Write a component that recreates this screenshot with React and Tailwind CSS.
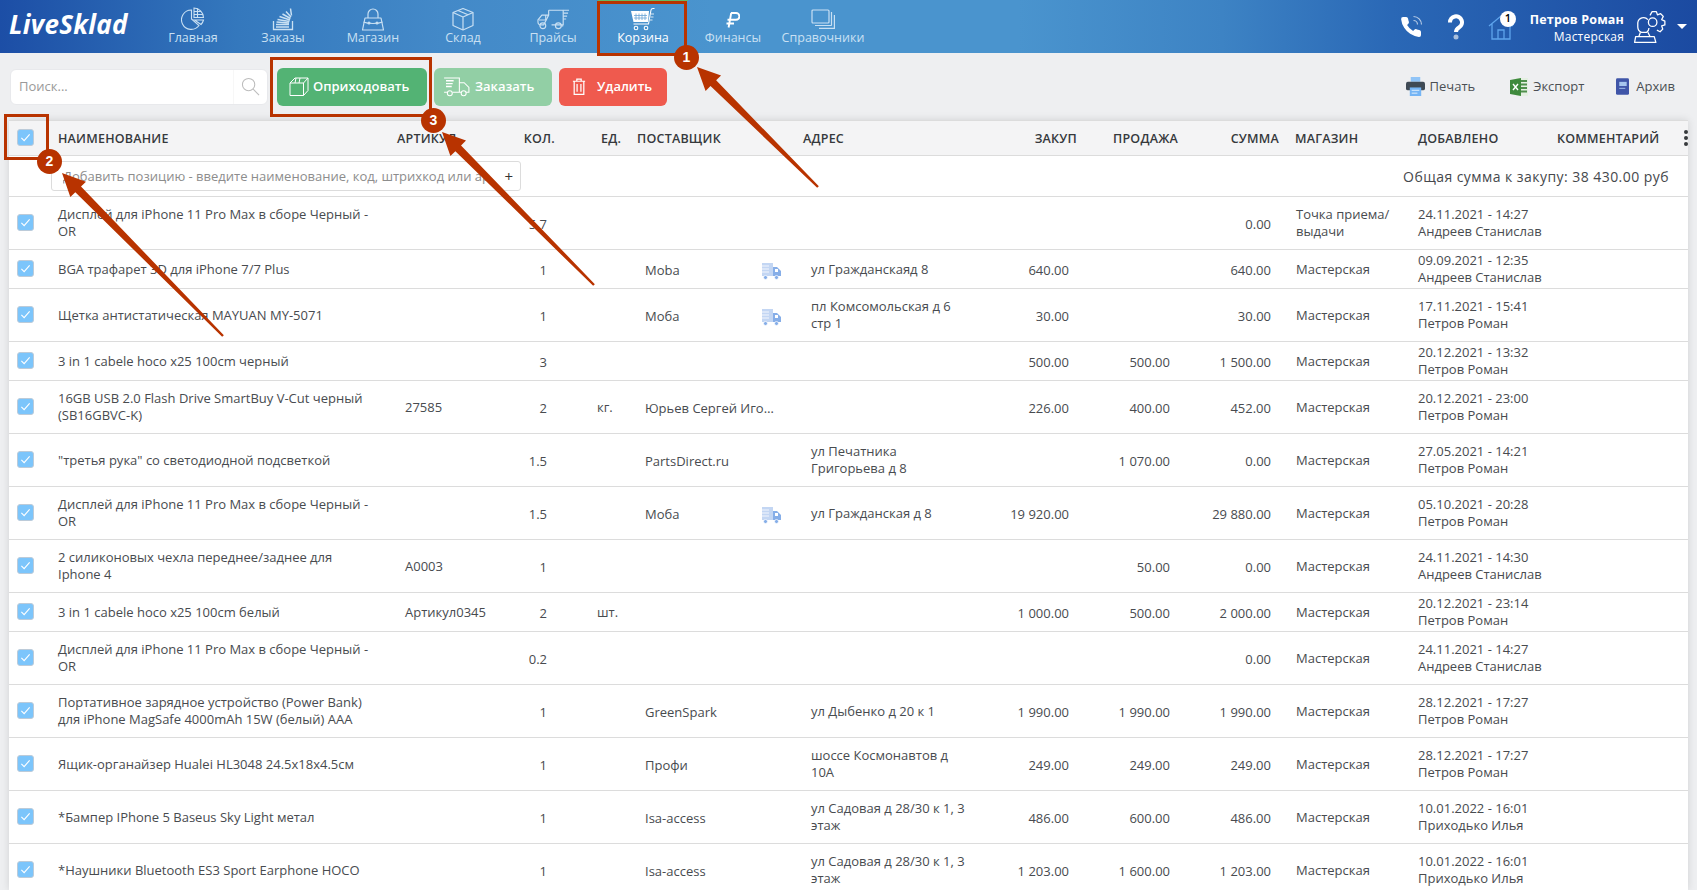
// LiveSklad - страница "Корзина" с аннотациями

const navItems = [
    { label: 'Главная', icon: PieIcon },
    { label: 'Заказы', icon: OrdersIcon },
    { label: 'Магазин', icon: BagIcon },
    { label: 'Склад', icon: BoxIcon },
    { label: 'Прайсы', icon: DeliveryIcon },
    { label: 'Корзина', icon: CartIcon, active: true },
    { label: 'Финансы', icon: RubleIcon },
    { label: 'Справочники', icon: CopyIcon },
];

const dispName = 'Дисплей для iPhone 11 Pro Max в сборе Черный -\nOR';

const rows = [
    { name: dispName, qty: '5.7', sum: '0.00', store: 'Точка приема/\nвыдачи', date: '24.11.2021 - 14:27', user: 'Андреев Станислав' },
    { name: 'BGA трафарет 3D для iPhone 7/7 Plus', qty: '1', supplier: 'Moba', truck: true, addr: 'ул Гражданскаяд 8', buy: '640.00', sum: '640.00', date: '09.09.2021 - 12:35', user: 'Андреев Станислав' },
    { name: 'Щетка антистатическая MAYUAN MY-5071', qty: '1', supplier: 'Моба', truck: true, addr: 'пл Комсомольская д 6\nстр 1', buy: '30.00', sum: '30.00', date: '17.11.2021 - 15:41', user: 'Петров Роман' },
    { name: '3 in 1 cabele hoco x25 100cm черный', qty: '3', buy: '500.00', sell: '500.00', sum: '1 500.00', date: '20.12.2021 - 13:32', user: 'Петров Роман' },
    { name: '16GB USB 2.0 Flash Drive SmartBuy V-Cut черный\n(SB16GBVC-K)', art: '27585', qty: '2', unit: 'кг.', supplier: 'Юрьев Сергей Игоревич', buy: '226.00', sell: '400.00', sum: '452.00', date: '20.12.2021 - 23:00', user: 'Петров Роман' },
    { name: '"третья рука" со светодиодной подсветкой', qty: '1.5', supplier: 'PartsDirect.ru', addr: 'ул Печатника\nГригорьева д 8', sell: '1 070.00', sum: '0.00', date: '27.05.2021 - 14:21', user: 'Петров Роман' },
    { name: dispName, qty: '1.5', supplier: 'Моба', truck: true, addr: 'ул Гражданская д 8', buy: '19 920.00', sum: '29 880.00', date: '05.10.2021 - 20:28', user: 'Петров Роман' },
    { name: '2 силиконовых чехла переднее/заднее для\nIphone 4', art: 'A0003', qty: '1', sell: '50.00', sum: '0.00', date: '24.11.2021 - 14:30', user: 'Андреев Станислав' },
    { name: '3 in 1 cabele hoco x25 100cm белый', art: 'Артикул0345', qty: '2', unit: 'шт.', buy: '1 000.00', sell: '500.00', sum: '2 000.00', date: '20.12.2021 - 23:14', user: 'Петров Роман' },
    { name: dispName, qty: '0.2', sum: '0.00', date: '24.11.2021 - 14:27', user: 'Андреев Станислав' },
    { name: 'Портативное зарядное устройство (Power Bank)\nдля iPhone MagSafe 4000mAh 15W (белый) AAA', qty: '1', supplier: 'GreenSpark', addr: 'ул Дыбенко д 20 к 1', buy: '1 990.00', sell: '1 990.00', sum: '1 990.00', date: '28.12.2021 - 17:27', user: 'Петров Роман' },
    { name: 'Ящик-органайзер Hualei HL3048 24.5x18x4.5см', qty: '1', supplier: 'Профи', addr: 'шоссе Космонавтов д\n10А', buy: '249.00', sell: '249.00', sum: '249.00', date: '28.12.2021 - 17:27', user: 'Петров Роман' },
    { name: '*Бампер IPhone 5 Baseus Sky Light метал', qty: '1', supplier: 'Isa-access', addr: 'ул Садовая д 28/30 к 1, 3\nэтаж', buy: '486.00', sell: '600.00', sum: '486.00', date: '10.01.2022 - 16:01', user: 'Приходько Илья' },
    { name: '*Наушники Bluetooth ES3 Sport Earphone HOCO', qty: '1', supplier: 'Isa-access', addr: 'ул Садовая д 28/30 к 1, 3\nэтаж', buy: '1 203.00', sell: '1 600.00', sum: '1 203.00', date: '10.01.2022 - 16:01', user: 'Приходько Илья' },
];

/* nav icons */
function PieIcon() {
    return (
        <svg viewBox="0 0 24 24" className="w-6 h-6" fill="none" stroke="currentColor" strokeWidth="1.1">
            <path d="M10.5 3 A9.7 9.7 0 1 0 18 18.5 L10.5 12 Z" />
            <path d="M13 1 A10 10 0 0 1 22.5 10.5 H13 Z" />
            <path d="M13 4.5 H20 M13 7.5 H22 M16.5 1.5 V10.5" />
            <path d="M13.5 13 H22.5 A10 10 0 0 1 20 17.5 Z" />
        </svg>
    );
}

function OrdersIcon() {
    return (
        <svg viewBox="0 0 24 24" className="w-6 h-6" fill="none" stroke="currentColor">
            <path d="M2.5 14 V22.5 H21.5 V14" strokeWidth="1.3" />
            <path d="M5 20 H18 M5 17.5 H18 M5.5 15 L18 16 M6.5 12.5 L18.5 14.5 M8.5 9.5 L19 13 M11.5 7 L19.5 11.5 M15 4.5 L20 10 M19.5 1.5 L20.5 8.5" strokeWidth="1.5" />
        </svg>
    );
}

function BagIcon() {
    return (
        <svg viewBox="0 0 24 24" className="w-6 h-6" fill="none" stroke="currentColor" strokeWidth="1.2">
            <path d="M4 11 H20 L22.5 23 H1.5 Z" strokeLinejoin="round" />
            <path d="M7 11 V7 A5 5 0 0 1 17 7 V11" />
            <path d="M2.5 15 C7 17 17 17 21.5 15" />
            <circle cx="8" cy="16" r="0.9" fill="currentColor" />
            <circle cx="16" cy="16" r="0.9" fill="currentColor" />
        </svg>
    );
}

function BoxIcon() {
    return (
        <svg viewBox="0 0 24 24" className="w-6 h-6" fill="none" stroke="currentColor" strokeWidth="1.2" strokeLinejoin="round">
            <path d="M12 1.5 L22 5.5 V18.5 L12 23 L2 18.5 V5.5 Z" />
            <path d="M2 5.5 L12 10 L22 5.5 M12 10 V23 M7 3.5 L17 7.8" />
        </svg>
    );
}

function DeliveryIcon() {
    return (
        <svg viewBox="0 0 34 24" className="w-[33px] h-6" fill="none" stroke="currentColor" strokeWidth="1.2" strokeLinejoin="round">
            <path d="M12 3 H27 V18 H15 M7 18 H4 Q1 18 1 15 V13 L5 8 H12 Z" />
            <path d="M12 3 V8 M9 8 V13 H2" />
            <circle cx="6" cy="19" r="3" />
            <circle cx="22" cy="19" r="3" />
            <path d="M25 19 H27 M27 3 H33 M27 6 H32 M27 9 H31 M27 12 H30" />
        </svg>
    );
}

function CartIcon() {
    return (
        <svg viewBox="0 0 26 24" className="w-[26px] h-6">
            <path d="M1 4 H19 L18 15 H3.5 Z" fill="#ffffff" />
            <path d="M6 6.5 V13 M9 6.5 V13 M12 6.5 V13 M15 6.5 V13 M4 8.5 H17 M4 11 H17" stroke="#6aa5d6" strokeWidth="0.8" />
            <path d="M3.5 17 H18.5 L21 3 Q21.3 1.5 23 1.5 H24.5" stroke="#ffffff" strokeWidth="1.1" fill="none" />
            <circle cx="6" cy="21" r="1.8" fill="none" stroke="#ffffff" strokeWidth="1.1" />
            <circle cx="16" cy="21" r="1.8" fill="none" stroke="#ffffff" strokeWidth="1.1" />
            <path d="M21 7 H24 M20.5 10 H23.5 M20 13 H22.5" stroke="#ffffff" strokeWidth="0.8" />
        </svg>
    );
}

function RubleIcon() {
    return (
        <svg viewBox="0 0 14 16" className="w-[14px] h-4 mt-[1px]" fill="none" stroke="#ffffff" strokeWidth="1.9">
            <path d="M5 1 H10 A3.3 3.3 0 0 1 10 7.8 H1.5 M5.2 1 L2.6 15.5 M0.5 11.5 H8" />
        </svg>
    );
}

function CopyIcon() {
    return (
        <svg viewBox="0 0 24 20" className="w-[24px] h-5" fill="none" stroke="currentColor" strokeWidth="1.2">
            <rect x="1" y="1" width="17" height="13" rx="1" />
            <path d="M20.5 3 V16 Q20.5 16.5 20 16.5 H4 M23.4 6 V19.3 H8" />
        </svg>
    );
}

/* small toolbar / table icons */
function TruckBadge() {
    return (
        <svg viewBox="0 0 20 20" className="w-5 h-5 shrink-0">
            <path d="M1 2 H12 V15 H1 Z" fill="#c3d6f3" />
            <path d="M1 5 H8 M1 8 H8 M1 11 H8" stroke="#ffffff" strokeWidth="0.8" />
            <path d="M12 6 H16 L20 10 V15 H12 Z" fill="#86aee8" />
            <rect x="14" y="8" width="3" height="3" fill="#ffffff" />
            <circle cx="4.5" cy="16.5" r="2" fill="#86aee8" stroke="#ffffff" strokeWidth="0.7" />
            <circle cx="15.5" cy="16.5" r="2" fill="#86aee8" stroke="#ffffff" strokeWidth="0.7" />
        </svg>
    );
}

function Checkbox() {
    return (
        <span className="-mt-px flex items-center justify-center w-[17px] h-[17px] rounded-[3px] border border-[#bccbd9] bg-[#7cc5fb]">
            <svg viewBox="0 0 12 12" className="w-[11px] h-[11px]" fill="none" stroke="#ffffff" strokeWidth="1.2">
                <path d="M1.5 6.5 L4.5 9.5 L10.5 2.5" />
            </svg>
        </span>
    );
}

function Arrow({ from, to }) {
    const [x1, y1] = from;
    const [x2, y2] = to;
    const len = Math.hypot(x2 - x1, y2 - y1);
    const ux = (x2 - x1) / len;
    const uy = (y2 - y1) / len;
    const nx = -uy;
    const ny = ux;
    const hx = x2 - ux * 23;
    const hy = y2 - uy * 23;
    const pts = [
        [x1 + nx * 1.2, y1 + ny * 1.2],
        [hx + nx * 4, hy + ny * 4],
        [hx + nx * 11, hy + ny * 11],
        [x2, y2],
        [hx - nx * 11, hy - ny * 11],
        [hx - nx * 4, hy - ny * 4],
        [x1 - nx * 1.2, y1 - ny * 1.2],
    ];
    return <polygon points={pts.map((p) => p.join(',')).join(' ')} fill="#b83300" />;
}

function Badge({ className, children }) {
    return (
        <span className={`absolute flex items-center justify-center w-[25px] h-[25px] rounded-full bg-[#b83300] text-white text-[14px] font-bold font-['Liberation_Sans',sans-serif] ${className}`}>
            {children}
        </span>
    );
}

function TopBar() {
    return (
        <header className="flex items-stretch h-[53px] shrink-0 bg-[linear-gradient(90deg,#1c4ea6_0%,#3478bd_14%,#4389c8_26%,#4a94ce_42%,#4a94ce_60%,#3d83c4_72%,#2a68b6_82%,#1b4aa1_100%)]">
            <div className="w-[148px] pl-[9px] flex items-center text-white text-[26px] font-bold italic tracking-[0.3px] font-['Open_Sans',sans-serif] pb-[5px]">
                LiveSklad
            </div>
            <nav className="flex">
                {navItems.map((item) => {
                    const Icon = item.icon;
                    return (
                        <div
                            key={item.label}
                            className={`w-[90px] flex flex-col items-center ${item.active ? 'pt-[6px] text-white border-t border-[#63b96a]' : 'pt-[7px] text-[#c9e0f3]'}`}
                        >
                            <span className="h-6 flex items-center"><Icon /></span>
                            <span className="text-[12.5px] leading-[17px] -mt-[2px] whitespace-nowrap">{item.label}</span>
                        </div>
                    );
                })}
            </nav>
            <div className="ml-auto flex items-center pr-[10px] text-white">
                <svg viewBox="0 0 24 24" className="w-6 h-6">
                    <path d="M22 16.92v3a2 2 0 0 1-2.18 2 19.79 19.79 0 0 1-8.63-3.07 19.5 19.5 0 0 1-6-6 19.79 19.79 0 0 1-3.07-8.67A2 2 0 0 1 4.11 2h3a2 2 0 0 1 2 1.72 12.84 12.84 0 0 0 .7 2.81 2 2 0 0 1-.45 2.11L8.09 9.91a16 16 0 0 0 6 6l1.27-1.27a2 2 0 0 1 2.11-.45 12.84 12.84 0 0 0 2.81.7A2 2 0 0 1 22 16.92z" fill="#ffffff" />
                    <path d="M14.5 1.5a8 8 0 0 1 8 8 M14.5 5.5a4 4 0 0 1 4 4" fill="none" stroke="#b8cce6" strokeWidth="1.2" />
                </svg>
                <svg viewBox="0 0 20 26" className="w-5 h-[26px] ml-[23px]">
                    <path d="M4 8.5 A6 6 0 1 1 13 13.5 C11 14.7 10 15.5 10 18" fill="none" stroke="#ffffff" strokeWidth="4" />
                    <circle cx="10" cy="23" r="2.5" fill="#a9bfdc" />
                </svg>
                <div className="relative w-[26px] h-[26px] ml-[22px]">
                    <svg viewBox="0 0 26 26" className="w-[26px] h-[26px]" fill="none" stroke="#5ea4ec" strokeWidth="1.3">
                        <path d="M1 12 L13 2 L25 12 M4 10 V25 H22 V10 M10 25 V16 H16 V25" />
                    </svg>
                    <span className="absolute -top-[3px] left-[12px] w-4 h-4 rounded-full bg-white text-black text-[11px] font-semibold flex items-center justify-center">1</span>
                </div>
                <div className="w-[100px] ml-[10px] pt-[2px] text-right whitespace-nowrap">
                    <div className="text-[12.5px] leading-[17px] font-bold tracking-[0.15px]">Петров Роман</div>
                    <div className="text-[12px] leading-[17px] tracking-[0.2px]">Мастерская</div>
                </div>
                <svg viewBox="0 0 32 32" className="w-[34px] h-[34px] ml-[9px]" fill="none" stroke="#ffffff" strokeWidth="1.2" strokeLinejoin="round">
                    <path d="M16 5 L18 1.5 H22 L23 4.5 L26 3.5 L28.5 6 L27 9 L30 10.5 V14 L27 15 L28 18 L25.5 20.5 L22.5 19" />
                    <circle cx="18.5" cy="11.5" r="4" />
                    <path d="M14 9 A5.5 5.5 0 0 0 4.5 12 V16 A5.5 5.5 0 0 0 8 21 H13 A5.5 5.5 0 0 0 15 17" />
                    <path d="M7 21 L5.5 25 H2.5 L1.5 30.5 H21.5 L20 25 H16 L14 21 M5.5 25 H16" />
                </svg>
                <span className="ml-[10px] w-0 h-0 border-x-[5px] border-x-transparent border-t-[5px] border-t-white" />
            </div>
        </header>
    );
}

function Toolbar() {
    return (
        <div className="flex items-center h-[67px] shrink-0 pl-[10px] pr-[22px] text-[13px] text-[#4b4f54]">
            <div className="flex items-center w-[258px] h-9 rounded-md bg-white border border-[#e8e9ec]">
                <span className="flex-1 pl-2 text-[#9a9a9a]">Поиск...</span>
                <span className="w-[34px] h-full flex items-center justify-center border-l border-[#f7f7f7]">
                    <svg viewBox="0 0 20 20" className="w-[19px] h-[19px]" fill="none" stroke="#bcbcbc" strokeWidth="1.1">
                        <circle cx="8" cy="8" r="6.5" />
                        <path d="M12.8 12.8 L19 19" />
                    </svg>
                </span>
            </div>
            <button className="ml-[9px] w-[150px] h-[38px] rounded-md bg-[#53b374] text-white text-[13px] font-semibold flex items-center pl-3">
                <svg viewBox="0 0 24 19" className="w-6 h-[19px]" fill="none" stroke="#ffffff" strokeWidth="1" strokeLinejoin="round">
                    <path d="M1 6 L6 1 H19 V13.5 L14.5 18.5 H1 Z M1 6 H14.5 V18.5 M14.5 6 L19 1 M7 1 L6 6 M11 1 L10 6" />
                </svg>
                Оприходовать
            </button>
            <button className="ml-[7px] w-[118px] h-[38px] rounded-md bg-[#92cfa5] text-white text-[13px] font-semibold flex items-center pl-[9px] gap-[5px]">
                <svg viewBox="0 0 28 22" className="w-[27px] h-[21px]" fill="none" stroke="#ffffff" strokeWidth="1.1">
                    <path d="M1 2 H17 V17 H10 M4 17 H1 Z M17 7 H22 L27 12 V17 H24 M17 17 H19" />
                    <path d="M3 5 H11 M3 8 H10 M3 11 H9" strokeWidth="1.5" />
                    <circle cx="7" cy="18" r="2.6" />
                    <circle cx="21.5" cy="18" r="2.6" />
                </svg>
                Заказать
            </button>
            <button className="ml-[7px] w-[108px] h-[38px] rounded-md bg-[#ef5a4e] text-white text-[13px] font-semibold flex items-center pl-[13px] gap-[11px]">
                <svg viewBox="0 0 16 20" className="w-[14px] h-[19px]" fill="none" stroke="#ffffff" strokeWidth="1.4">
                    <path d="M1 4 H15 M5.5 4 V1.5 H10.5 V4 M2.5 4 V19 H13.5 V4 M5.8 7 V16 M10.2 7 V16" />
                </svg>
                Удалить
            </button>

            <div className="ml-auto flex items-center">
                <svg viewBox="0 0 20 20" className="w-[19px] h-[19px]">
                    <rect x="5" y="0" width="10" height="5" fill="#90c4f7" />
                    <rect x="0" y="5" width="20" height="9" rx="2" fill="#3f4a55" />
                    <rect x="4" y="11" width="12" height="9" fill="#75b5f5" />
                    <path d="M6 14 H14 M6 17 H12" stroke="#ffffff" strokeWidth="0.8" />
                </svg>
                <span className="ml-[5px]">Печать</span>
                <svg viewBox="0 0 18 18" className="w-[18px] h-[18px] ml-[35px]">
                    <path d="M6 0 H18 V18 H6 Z" fill="#e4efe2" />
                    <path d="M11 3 H17 M11 6.5 H17 M11 10 H17 M11 13.5 H17" stroke="#4f8f4c" strokeWidth="2" />
                    <path d="M0 2 L11 0 V18 L0 16 Z" fill="#3f8a3d" />
                    <path d="M3 6 L8 12 M8 6 L3 12" stroke="#ffffff" strokeWidth="1.4" />
                </svg>
                <span className="ml-[5px]">Экспорт</span>
                <svg viewBox="0 0 14 18" className="w-[13px] h-[17px] ml-8">
                    <rect x="0" y="0" width="14" height="18" rx="1.5" fill="#3f55a8" />
                    <rect x="3.5" y="4" width="8" height="4.5" fill="#a7c6ee" />
                    <path d="M3.5 11 H10" stroke="#a7c6ee" strokeWidth="1" />
                </svg>
                <span className="ml-[7px]">Архив</span>
            </div>
        </div>
    );
}

function TableHead() {
    return (
        <thead>
            <tr className="h-[35px] bg-[#f4f4f5] border-y border-[#dcdcdc] text-[12.5px] font-semibold text-[#36393c] tracking-[0.22px] uppercase">
                <th className="font-semibold pl-2"><Checkbox /></th>
                <th className="font-semibold text-left pl-[7px]">Наименование</th>
                <th className="font-semibold text-left">Артикул</th>
                <th className="font-semibold text-right pr-[5px]">Кол.</th>
                <th className="font-semibold text-left pl-[41px]">Ед.</th>
                <th className="font-semibold text-left">Поставщик</th>
                <th className="font-semibold text-left">Адрес</th>
                <th className="font-semibold text-right">Закуп</th>
                <th className="font-semibold text-right">Продажа</th>
                <th className="font-semibold text-right">Сумма</th>
                <th className="font-semibold text-left pl-4">Магазин</th>
                <th className="font-semibold text-left">Добавлено</th>
                <th className="font-semibold text-left">
                    <div className="flex items-center">
                        Комментарий
                        <span className="ml-auto flex flex-col gap-[2px]">
                            <i className="block w-1 h-1 rounded-full bg-[#36393c]" />
                            <i className="block w-1 h-1 rounded-full bg-[#36393c]" />
                            <i className="block w-1 h-1 rounded-full bg-[#36393c]" />
                        </span>
                    </div>
                </th>
            </tr>
        </thead>
    );
}

function ProductRow({ row }) {
    return (
        <tr className="border-b border-[#dcdcdc]">
            <td className="h-[39px] pl-2"><Checkbox /></td>
            <td className="pl-[7px] py-[9px] whitespace-pre-line">{row.name}</td>
            <td className="pl-2">{row.art}</td>
            <td className="text-right pr-[13px] pt-[3px]">{row.qty}</td>
            <td className="pl-[37px]">{row.unit}</td>
            <td className="pl-2 pt-[3px]">
                {row.truck ? (
                    <div className="flex items-center">
                        <span className="w-[116px]">{row.supplier}</span>
                        <TruckBadge />
                    </div>
                ) : (
                    row.supplier && <div className="w-[133px] truncate">{row.supplier}</div>
                )}
            </td>
            <td className="pl-2 py-[9px] whitespace-pre-line">{row.addr}</td>
            <td className="text-right pr-2 pt-[3px]">{row.buy}</td>
            <td className="text-right pr-2 pt-[3px]">{row.sell}</td>
            <td className="text-right pr-2 pt-[3px]">{row.sum}</td>
            <td className="pl-[17px] whitespace-pre-line">{row.store || 'Мастерская'}</td>
            <td className="whitespace-nowrap">{row.date}<br />{row.user}</td>
            <td />
        </tr>
    );
}

function CartTable() {
    return (
        <div className="mx-[9px] flex-1 min-h-0 overflow-hidden bg-white shadow-[0_0_8px_rgba(0,0,0,0.12)]">
            <table className="w-[1679px] table-fixed text-[13px] leading-[17px] text-[#484b4f]">
                <colgroup>
                    <col className="w-[42px]" />
                    <col className="w-[346px]" />
                    <col className="w-[113px]" />
                    <col className="w-[50px]" />
                    <col className="w-[77px]" />
                    <col className="w-[166px]" />
                    <col className="w-[197px]" />
                    <col className="w-[77px]" />
                    <col className="w-[101px]" />
                    <col className="w-[101px]" />
                    <col className="w-[139px]" />
                    <col className="w-[139px]" />
                    <col className="w-[131px]" />
                </colgroup>
                <TableHead />
                <tbody>
                    <tr className="border-b border-[#dcdcdc] h-[41px]">
                        <td colSpan={13} className="pl-[42px] pr-[19px]">
                            <div className="flex items-center justify-between">
                                <div className="w-[470px] h-[30px] flex items-center rounded-[3px] border border-[#dcdcdc] pl-[11px] pr-[7px]">
                                    <span className="flex-1 overflow-hidden whitespace-nowrap text-[#8d8d8d]">
                                        Добавить позицию - введите наименование, код, штрихкод или артикул
                                    </span>
                                    <span className="ml-[14px] text-[#333] text-[15px]">+</span>
                                </div>
                                <span className="text-[14px] tracking-[0.45px] text-[#45484c]">Общая сумма к закупу: 38 430.00 руб</span>
                            </div>
                        </td>
                    </tr>
                    {rows.map((row, i) => (
                        <ProductRow key={i} row={row} />
                    ))}
                </tbody>
            </table>
        </div>
    );
}

function Annotations() {
    return (
        <div className="absolute inset-0 pointer-events-none">
            <svg className="absolute inset-0 w-full h-full">
                <Arrow from={[818, 187]} to={[697, 67]} />
                <Arrow from={[223, 336]} to={[62, 173]} />
                <Arrow from={[594, 285]} to={[442, 132]} />
            </svg>
            <div className="absolute left-[597px] top-[1px] w-[90px] h-[55px] border-[3px] border-[#b83300]" />
            <div className="absolute left-[4px] top-[114px] w-[45px] h-[46px] border-[3px] border-[#b83300]" />
            <div className="absolute left-[270px] top-[57px] w-[162px] h-[60px] border-[3px] border-[#b83300]" />
            <Badge className="left-[674px] top-[45px]">1</Badge>
            <Badge className="left-[37px] top-[149px]">2</Badge>
            <Badge className="left-[421px] top-[108px]">3</Badge>
        </div>
    );
}

export default function App() {
    return (
        <div className="relative flex flex-col h-screen overflow-hidden bg-[#eeeff1] font-['Open_Sans',sans-serif]">
            <TopBar />
            <Toolbar />
            <CartTable />
            <Annotations />
        </div>
    );
}
